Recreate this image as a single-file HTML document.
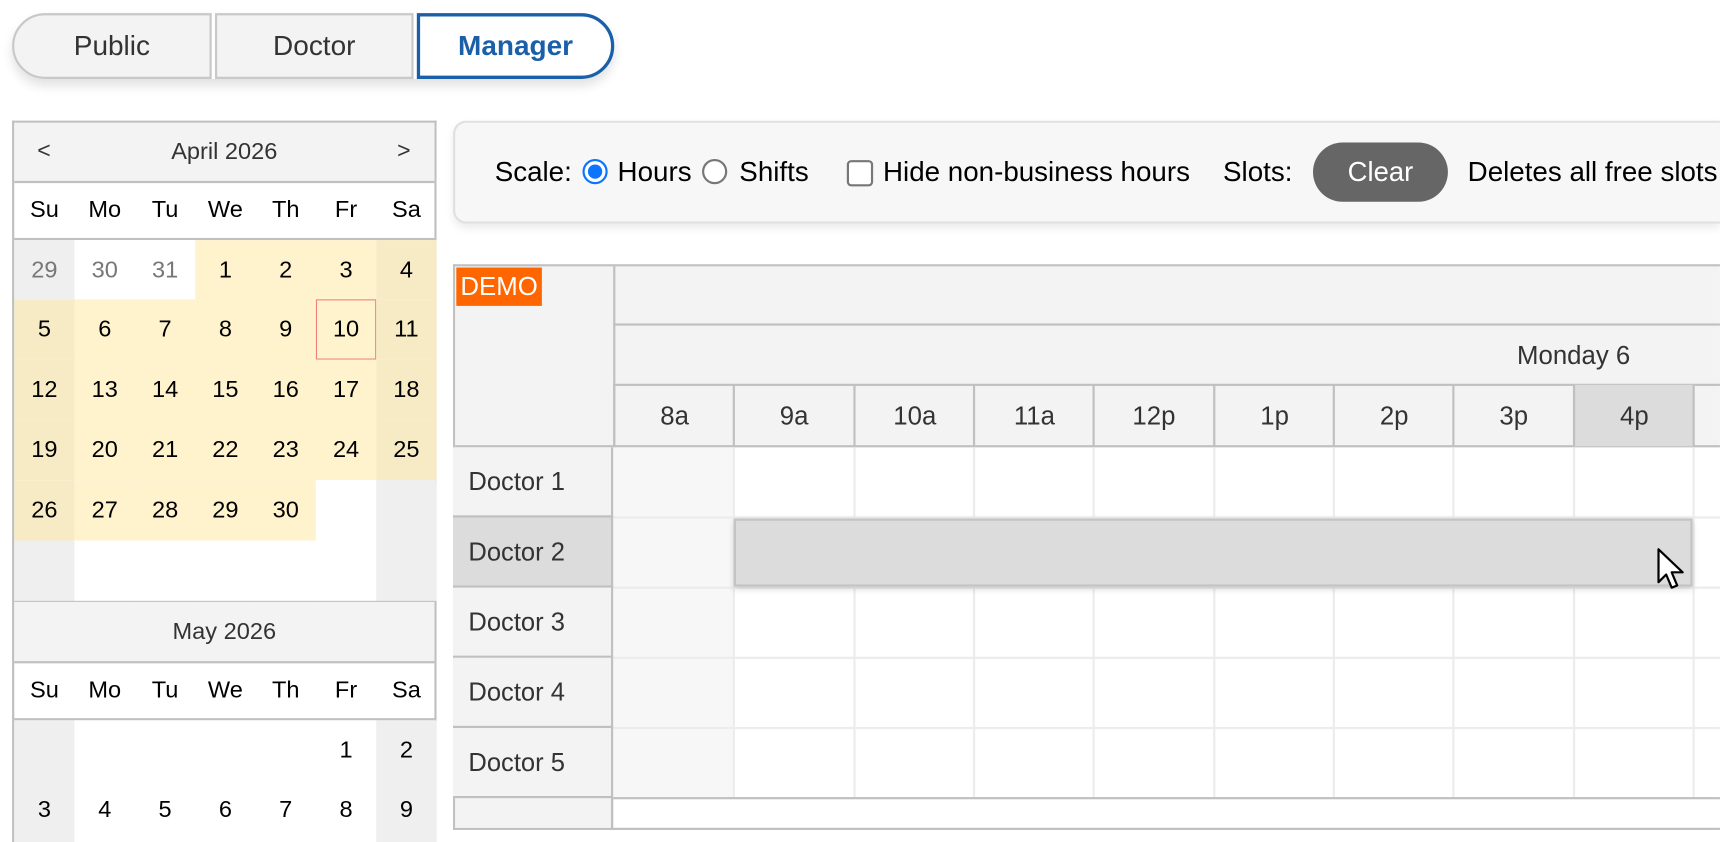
<!DOCTYPE html>
<html><head><meta charset="utf-8"><style>
html,body{margin:0;padding:0;background:#fff;overflow:hidden;width:1720px;height:842px}
#o{position:relative;width:1720px;height:842px;overflow:hidden}
#w{position:absolute;left:0;top:0;width:1568px;height:768px;overflow:hidden;transform:scale(1.0969,1.0964);transform-origin:0 0;font-family:"Liberation Sans",sans-serif;}
.a{position:absolute;box-sizing:border-box}
.tab{position:absolute;top:12px;height:60px;background:#f3f3f3;border:2px solid #c8c8c8;font-size:25.5px;color:#333;display:flex;align-items:center;justify-content:center;box-sizing:border-box}
.c{position:absolute;width:55px;height:55px;display:flex;align-items:center;justify-content:center;font-size:21.5px;color:#000}
.tb{font-size:25.3px;color:#000;position:absolute;top:142px;line-height:30px;white-space:nowrap}
.hr{position:absolute;top:351px;height:56px;width:110px;display:flex;align-items:center;justify-content:center;font-size:23.5px;color:#333;border-left:2px solid #c0c0c0;box-sizing:border-box}
.doc{position:absolute;left:413px;width:146px;height:64px;background:#f3f3f3;border-bottom:2px solid #c0c0c0;box-sizing:border-box;font-size:23.3px;color:#333;padding-left:14px;display:flex;align-items:center}
</style></head><body><div id="o"><div id="w">

<div class="a" style="left:11px;top:12px;width:549px;height:60px;border-radius:30px;box-shadow:0 6px 10px rgba(0,0,0,0.12)"></div>
<div class="tab" style="left:11px;width:182px;border-radius:30px 0 0 30px">Public</div>
<div class="tab" style="left:196px;width:181px">Doctor</div>
<div class="tab" style="left:380px;width:180px;background:#fff;border:3px solid #1a5fa8;border-radius:0 30px 30px 0;color:#1a5fa8;font-weight:bold">Manager</div>

<!-- calendar -->
<div class="a" style="left:11px;top:110px;width:387px;height:658px;border:2px solid #c0c0c0;border-bottom:none;background:#fff"></div>
<div class="a" style="left:13px;top:112px;width:383px;height:55px;background:#f3f3f3;border-bottom:2px solid #c0c0c0"></div>
<div class="a" style="left:34px;top:126px;font-size:21px;color:#333">&lt;</div>
<div class="a" style="left:13px;top:126px;width:383px;text-align:center;font-size:21.5px;color:#333">April 2026</div>
<div class="a" style="left:362px;top:126px;font-size:21px;color:#333">&gt;</div>
<div class="a" style="left:13px;top:217px;width:383px;height:2px;background:#c0c0c0"></div>
<div class="a" style="left:13px;top:547px;width:383px;height:58px;background:#f3f3f3;border-top:2px solid #c0c0c0;border-bottom:2px solid #c0c0c0"></div>
<div class="a" style="left:13px;top:564px;width:383px;text-align:center;font-size:21.5px;color:#333">May 2026</div>
<div class="a" style="left:13px;top:655px;width:383px;height:2px;background:#c0c0c0"></div>

<!-- toolbar -->
<div class="a" style="left:413px;top:110px;width:1155px;height:94px;background:#f7f7f7;border:2px solid #e0e0e0;border-right:none;border-radius:12px 0 0 12px;box-shadow:0 4px 8px rgba(0,0,0,0.08)"></div>
<div class="tb" style="left:451px">Scale:</div>
<div class="a" style="left:531px;top:145px;width:23px;height:23px;border-radius:50%;border:2px solid #0b75ff;background:#fff"><div class="a" style="left:3px;top:3px;width:13px;height:13px;border-radius:50%;background:#0b75ff"></div></div>
<div class="tb" style="left:563px">Hours</div>
<div class="a" style="left:640px;top:145px;width:23px;height:23px;border-radius:50%;border:2px solid #777;background:#fff"></div>
<div class="tb" style="left:674px">Shifts</div>
<div class="a" style="left:772px;top:146px;width:24px;height:24px;border-radius:4px;border:2px solid #777;background:#fff"></div>
<div class="tb" style="left:805px">Hide non-business hours</div>
<div class="tb" style="left:1115px">Slots:</div>
<div class="a" style="left:1197px;top:130px;width:123px;height:54px;border-radius:27px;background:#666;color:#fff;font-size:25px;display:flex;align-items:center;justify-content:center">Clear</div>
<div class="tb" style="left:1338px">Deletes all free slots</div>

<!-- scheduler -->
<div class="a" style="left:413px;top:241px;width:1155px;height:516px;border:2px solid #c0c0c0;border-right:none;background:#fff"></div>
<div class="a" style="left:415px;top:243px;width:144px;height:165px;background:#f3f3f3;border-bottom:2px solid #c0c0c0"></div>
<div class="a" style="left:559px;top:243px;width:1009px;height:165px;background:#f3f3f3;border-left:2px solid #c0c0c0;border-bottom:2px solid #c0c0c0"></div>
<div class="a" style="left:559px;top:295px;width:1009px;height:2px;background:#c0c0c0"></div>
<div class="a" style="left:559px;top:350px;width:1009px;height:2px;background:#c0c0c0"></div>
<div class="a" style="left:1383px;top:311px;font-size:23.5px;color:#333">Monday 6</div>
<div class="a" style="left:416px;top:244px;width:78px;height:35px;background:#ff6600;color:#fff;font-size:23.5px;display:flex;align-items:center;justify-content:center">DEMO</div>
<div class="a" style="left:415px;top:727px;width:144px;height:28px;background:#f3f3f3;border-right:2px solid #c0c0c0"></div>
<div class="a" style="left:559px;top:408px;width:109px;height:320px;background:#f7f7f7"></div>

</div></div>
<script>
var w=document.getElementById('w');
function add(h){w.insertAdjacentHTML('beforeend',h)}
var cols=[13,68,123,178,233,288,343];
var dn=['Su','Mo','Tu','We','Th','Fr','Sa'];
dn.forEach(function(d,i){add('<div class="c" style="left:'+cols[i]+'px;top:166px;height:51px">'+d+'</div>');add('<div class="c" style="left:'+cols[i]+'px;top:604px;height:51px">'+d+'</div>');});
var rows=[219,273,328,383,438,493];
for(var r=0;r<6;r++)for(var c=0;c<7;c++){
 var n=r*7+c-2, bg='#fff', txt='', col='#000';
 if(n<1){txt=29+c;col='#777';bg=c==0?'#efefef':'#fff';}
 else if(n<=30){txt=n;bg=(c==0||c==6)?'#f7ebc6':'#fef3cd';}
 else {bg=(c==0||c==6)?'#efefef':'#fff';}
 var ex=(n==10)?'border:1px solid #f08080;':'';
 add('<div class="c" style="left:'+cols[c]+'px;top:'+rows[r]+'px;height:'+(r==0?54:55)+'px;background:'+bg+';color:'+col+';box-sizing:border-box;'+ex+'">'+txt+'</div>');
}
var mrows=[657,711];
for(var r=0;r<2;r++)for(var c=0;c<7;c++){
 var n=r*7+c-4, bg=(c==0||c==6)?'#efefef':'#fff';
 add('<div class="c" style="left:'+cols[c]+'px;top:'+mrows[r]+'px;height:'+(r==1?57:55)+'px;align-items:flex-start;padding-top:15px;box-sizing:border-box;background:'+bg+'">'+(n>=1?n:'')+'</div>');
}
var hx=[559,668,778,887,996,1106,1215,1324,1434,1543];
var hl=['8a','9a','10a','11a','12p','1p','2p','3p','4p',''];
hx.forEach(function(x,i){
 add('<div class="hr" style="left:'+x+'px;'+(i==9?'width:25px;':'')+(i==8?'background:#dcdcdc;':'')+'">'+hl[i]+'</div>');
 if(i>0)add('<div class="a" style="left:'+x+'px;top:408px;width:2px;height:320px;background:#ececec"></div>');
});
[472,536,600,664].forEach(function(y){add('<div class="a" style="left:559px;top:'+(y-1)+'px;width:1009px;height:2px;background:#ececec"></div>')});
add('<div class="a" style="left:559px;top:727px;width:1009px;height:2px;background:#c0c0c0"></div>');
var docs=['Doctor 1','Doctor 2','Doctor 3','Doctor 4','Doctor 5'];
docs.forEach(function(d,i){add('<div class="doc" style="top:'+(408+i*64)+'px;'+(i==1?'background:#dcdcdc;':'')+'">'+d+'</div>')});
add('<div class="a" style="left:557px;top:408px;width:2px;height:349px;background:#c0c0c0"></div>');
add('<div class="a" style="left:669px;top:473px;width:874px;height:62px;background:#dcdcdc;border:2px solid #c4c4c4;box-shadow:0 2px 6px rgba(0,0,0,0.15)"></div>');
add('<svg class="a" style="left:1510px;top:499px" width="30" height="44" viewBox="0 0 30 44"><path d="M2 2 L2 32 L9 25 L14 37 L19 35 L14 23 L24 23 Z" fill="#fff" stroke="#000" stroke-width="2" stroke-linejoin="round"/></svg>');
</script>
</body></html>
